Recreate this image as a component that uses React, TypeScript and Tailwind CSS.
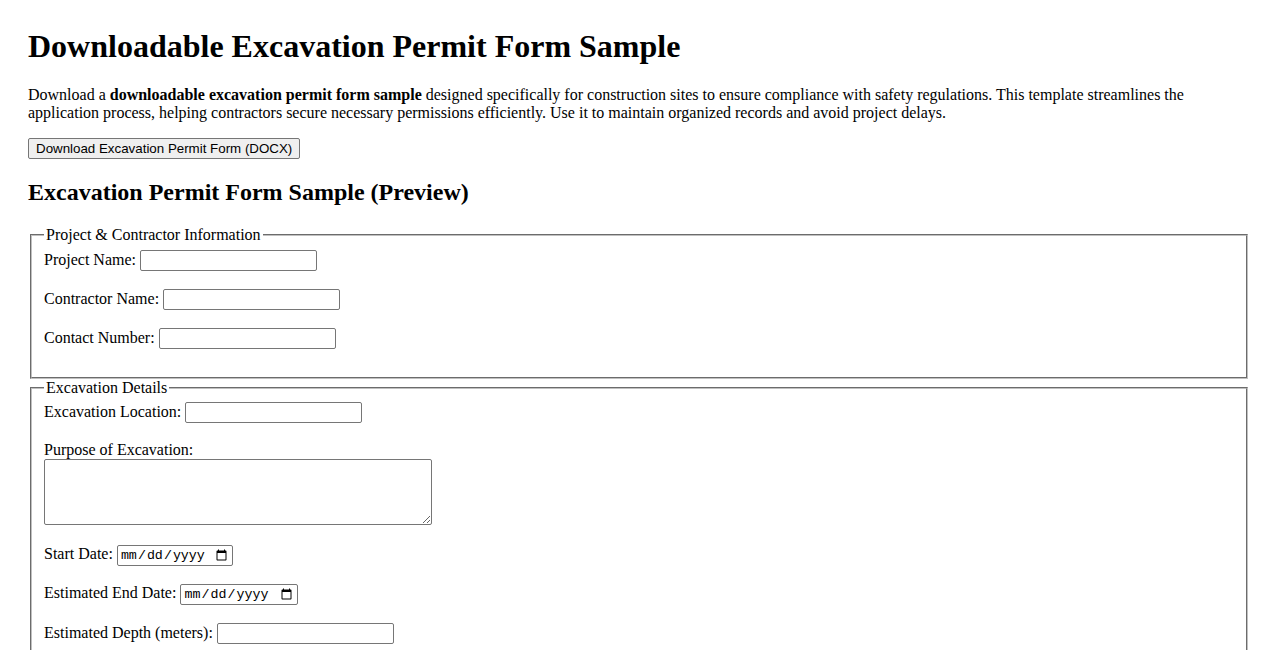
export default function App() {
  const inputCls =
    "w-[177px] h-[21px] border border-[#767676] rounded-[2px] px-[2px] bg-white align-baseline font-['Liberation_Sans',Arial,sans-serif] text-[13.33px]";
  const dateCls =
    "h-[21px] border border-[#767676] rounded-[2px] px-[2px] bg-white align-baseline font-['Liberation_Mono','DejaVu_Sans_Mono',monospace] text-[13.33px] text-black";

  return (
    <div className="min-h-screen bg-white px-[28px] pt-[28px] text-black font-['Liberation_Serif','Times_New_Roman',serif] text-[16px] leading-[normal]">
      <h1 className="text-[32px] font-bold leading-[normal] mb-[21.44px]">
        Downloadable Excavation Permit Form Sample
      </h1>
      <p className="mb-[16px]">
        Download a <strong className="font-bold">downloadable excavation permit form sample</strong> designed specifically for construction sites to ensure compliance with safety regulations. This template streamlines the application process, helping contractors secure necessary permissions efficiently. Use it to maintain organized records and avoid project delays.
      </p>
      <div>
        <button className="h-[21px] px-[7px] border border-[#767676] rounded-[2px] bg-[#efefef] text-black font-['Liberation_Sans',Arial,sans-serif] text-[13.33px] leading-[normal]">
          Download Excavation Permit Form (DOCX)
        </button>
      </div>

      <h2 className="text-[24px] font-bold leading-[normal] mt-[19.92px] mb-[19.92px]">
        Excavation Permit Form Sample (Preview)
      </h2>

      <form>
        {/* Project & Contractor */}
        <fieldset className="mx-[2px] px-[12px] pt-[5.6px] pb-[10px] border-2 [border-style:groove] border-[#c0c0c0]">
          <legend className="px-[2px]">Project &amp; Contractor Information</legend>
          <label>Project Name:</label> <input type="text" className={inputCls} />
          <br />
          <br />
          <label>Contractor Name:</label> <input type="text" className={inputCls} />
          <br />
          <br />
          <label>Contact Number:</label> <input type="text" className={inputCls} />
          <br />
          <br />
        </fieldset>

        {/* Excavation Details */}
        <fieldset className="mx-[2px] px-[12px] pt-[5.6px] pb-[10px] border-2 [border-style:groove] border-[#c0c0c0]">
          <legend className="px-[2px]">Excavation Details</legend>
          <label>Excavation Location:</label> <input type="text" className={inputCls} />
          <br />
          <br />
          <label>Purpose of Excavation:</label>
          <br />
          <textarea className="w-[388px] h-[66px] mb-[2px] border border-[#767676] rounded-[2px] px-[2px] bg-white align-bottom resize" />
          <br />
          <br />
          <label>Start Date:</label> <input type="date" className={dateCls + " w-[116px]"} />
          <br />
          <br />
          <label>Estimated End Date:</label> <input type="date" className={dateCls + " w-[118px]"} />
          <br />
          <br />
          <label>Estimated Depth (meters):</label> <input type="number" className={inputCls} />
          <br />
          <br />
          <label>Equipment to be Used:</label> <input type="text" className={inputCls} />
          <br />
          <br />
        </fieldset>
      </form>
    </div>
  );
}
